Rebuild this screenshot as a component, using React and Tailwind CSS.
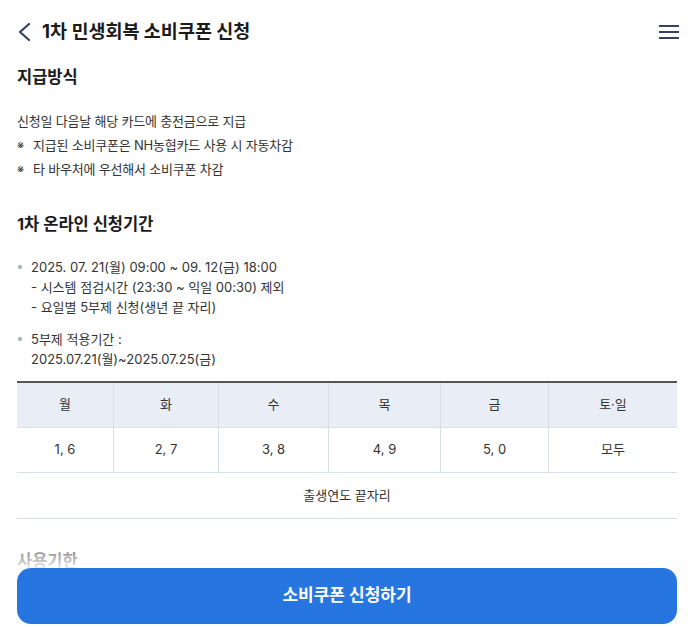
import React from 'react';

const days = [
    { day: '월', nums: '1, 6', w: 'w-[97px]' },
    { day: '화', nums: '2, 7', w: 'w-[105px]' },
    { day: '수', nums: '3, 8', w: 'w-[110px]' },
    { day: '목', nums: '4, 9', w: 'w-[112px]' },
    { day: '금', nums: '5, 0', w: 'w-[108px]' },
    { day: '토·일', nums: '모두', w: 'flex-1' }
];

const Bullet = ({ children }) => (
    <div className="flex">
        <span className="w-[14px] shrink-0 flex justify-start pt-[8px] pl-[1px]">
            <span className="w-[4px] h-[4px] rounded-full bg-[#a3abba]"></span>
        </span>
        <div className="leading-[20px]">{children}</div>
    </div>
);

const App = () => {
    return (
        <div
            className="relative w-[688px] h-[627px] overflow-hidden bg-white text-[#333]"
            style={{ fontFamily: 'Inter, "Noto Sans CJK KR", sans-serif' }}
        >
            {/* Header */}
            <div className="h-[64px] flex items-center justify-between pl-[16px] pr-[9px]">
                <div className="flex items-center gap-[10px]">
                    <svg width="16" height="20" viewBox="0 0 16 20" fill="none">
                        <path d="M13 2L4 10l9 8" stroke="#36415f" strokeWidth="2.2" strokeLinecap="round" strokeLinejoin="round" />
                    </svg>
                    <h1 className="text-[18.5px] font-bold text-[#1b1b1b]">1차 민생회복 소비쿠폰 신청</h1>
                </div>
                <div className="w-[20px] flex flex-col gap-[4px]">
                    <span className="h-[2px] bg-[#36415f]"></span>
                    <span className="h-[2px] bg-[#36415f]"></span>
                    <span className="h-[2px] bg-[#36415f]"></span>
                </div>
            </div>

            <div className="pl-[17px] pr-[11px]">
                <h2 className="text-[16.5px] font-bold text-[#1b1b1b] leading-[24px] pt-[1px]">지급방식</h2>
                <div className="mt-[20px] text-[13px] leading-[24px] tracking-[-0.2px]">
                    <p>신청일 다음날 해당 카드에 충전금으로 지급</p>
                    <p className="flex"><span className="w-[16px] text-[11px]">※</span>지급된 소비쿠폰은 NH농협카드 사용 시 자동차감</p>
                    <p className="flex"><span className="w-[16px] text-[11px]">※</span>타 바우처에 우선해서 소비쿠폰 차감</p>
                </div>

                <h2 className="mt-[31px] text-[16.5px] font-bold text-[#1b1b1b] leading-[24px]">1차 온라인 신청기간</h2>

                <div className="mt-[21px] text-[13px] flex flex-col gap-[12px]">
                    <Bullet>
                        <p>2025. 07. 21(월) 09:00 ~ 09. 12(금) 18:00</p>
                        <p>- 시스템 점검시간 (23:30 ~ 익일 00:30) 제외</p>
                        <p>- 요일별 5부제 신청(생년 끝 자리)</p>
                    </Bullet>
                    <Bullet>
                        <p>5부제 적용기간 :</p>
                        <p>2025.07.21(월)~2025.07.25(금)</p>
                    </Bullet>
                </div>

                {/* Table */}
                <div className="mt-[12px] border-t-2 border-[#555] text-[13px]">
                    <div className="flex h-[45px] bg-[#e9eef6] border-b border-[#d6dee9]">
                        {days.map((d, i) => (
                            <div key={d.day} className={`${d.w} flex items-center justify-center ${i < days.length - 1 ? 'border-r border-[#d6dee9]' : ''}`}>
                                {d.day}
                            </div>
                        ))}
                    </div>
                    <div className="flex h-[45px] border-b border-[#d6dee9]">
                        {days.map((d, i) => (
                            <div key={d.day} className={`${d.w} flex items-center justify-center ${i < days.length - 1 ? 'border-r border-[#d6dee9]' : ''}`}>
                                {d.nums}
                            </div>
                        ))}
                    </div>
                    <div className="h-[46px] flex items-center justify-center border-b border-[#d6dee9]">
                        출생연도 끝자리
                    </div>
                </div>

                <h2 className="mt-[30px] text-[16.5px] font-bold text-[#1b1b1b] leading-[24px]">사용기한</h2>
            </div>

            {/* Bottom button */}
            <div className="absolute inset-x-0 bottom-0">
                <div className="h-[26px] bg-gradient-to-b from-white/30 to-white/90"></div>
                <div className="bg-white pl-[17px] pr-[11px] pb-[3px]">
                    <button className="w-full h-[56px] rounded-[14px] bg-[#2776e0] text-white text-[17px] font-bold">
                        소비쿠폰 신청하기
                    </button>
                </div>
            </div>
        </div>
    );
};

export default App;
